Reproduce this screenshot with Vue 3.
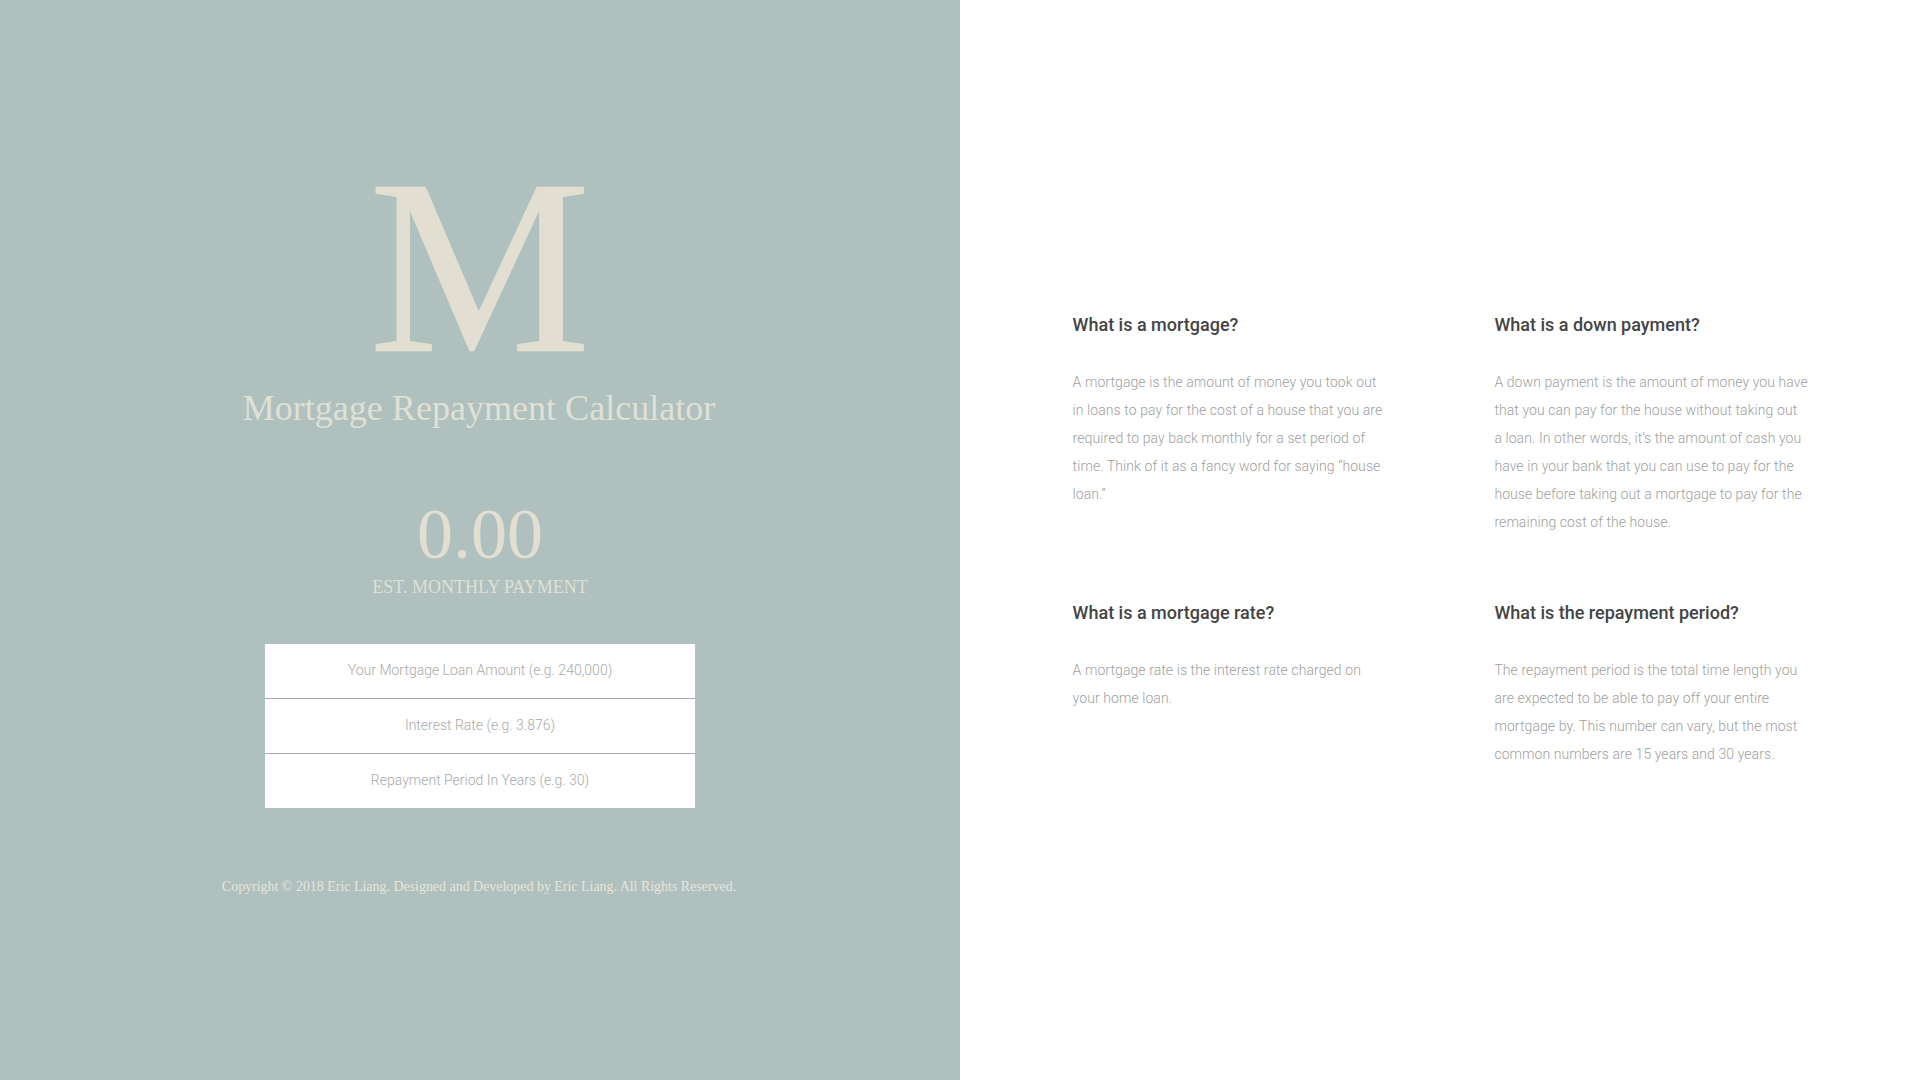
<script setup>
const fields = [
  'Your Mortgage Loan Amount (e.g. 240,000)',
  'Interest Rate (e.g. 3.876)',
  'Repayment Period In Years (e.g. 30)',
]
const faqs = [
  { q: 'What is a mortgage?', a: 'A mortgage is the amount of money you took out in loans to pay for the cost of a house that you are required to pay back monthly for a set period of time. Think of it as a fancy word for saying “house loan.”' },
  { q: 'What is a down payment?', a: 'A down payment is the amount of money you have that you can pay for the house without taking out a\u00A0loan. In other words, it’s the amount of cash you have in your bank that you can use to pay for the house before taking out a mortgage to pay for the remaining cost of the house.' },
  { q: 'What is a mortgage rate?', a: 'A mortgage rate is the interest rate charged on your home loan.' },
  { q: 'What is the repayment period?', a: 'The repayment period is the total time length you are expected to be able to pay off your entire mortgage by. This number can vary, but the most common numbers are 15 years and 30 years.' },
]
</script>

<template>
  <div class="page">
    <section class="calc">
      <div class="logo">M</div>
      <h1 class="title">Mortgage Repayment Calculator</h1>
      <div class="amount">0.00</div>
      <div class="label">EST. MONTHLY PAYMENT</div>
      <form class="fields">
        <input v-for="f in fields" :key="f" class="field" type="text" :placeholder="f" />
      </form>
      <p class="copy">Copyright © 2018 Eric Liang. Designed and Developed by Eric Liang. All Rights Reserved.</p>
    </section>
    <section class="info">
      <div class="grid">
        <article v-for="item in faqs" :key="item.q" class="faq">
          <h2>{{ item.q }}</h2>
          <p>{{ item.a }}</p>
        </article>
      </div>
    </section>
  </div>
</template>

<style>
html, body { margin: 0; background: #fff; }
</style>

<style scoped>
.page { display: flex; width: 1920px; height: 1080px; overflow: hidden; }
.calc {
  width: 960px; height: 1080px; background: #b0c0be; color: #e2dfd2;
  font-family: "Liberation Serif", serif; display: flex; flex-direction: column; align-items: center;
  padding-top: 153px; box-sizing: border-box;
}
.logo { font-size: 250px; line-height: 228px; height: 228px; -webkit-text-stroke: 0.5px #e2dfd2; }
.title { margin: 5px 2px 0 0; font-size: 36px; line-height: 44px; font-weight: 400; letter-spacing: 0.03px; color: #dfe0d6; }
.amount { margin-top: 64px; font-size: 72px; line-height: 80px; }
.label { font-size: 18px; line-height: 24px; color: #dfe0d6; margin-top: 1px; }
.fields { margin-top: 45px; display: flex; flex-direction: column; width: 430px; }
.field {
  height: 55px; width: 100%; box-sizing: border-box; border: 0; border-bottom: 1px solid #a8a8a8; background: #fff;
  text-align: center; font-family: Roboto, sans-serif; font-weight: 300; font-size: 14px; outline: 0; padding: 0 0 2px;
}
.field:last-child { border-bottom: 0; height: 54px; }
.field::placeholder { color: #aaa; opacity: 1; }
.copy { margin: 69px 2px 0 0; font-size: 14px; line-height: 20px; letter-spacing: -0.03px; color: #e6e6dc; }
.info { width: 960px; height: 1080px; font-family: Roboto, sans-serif; padding: 314px 0 0 112.6px; box-sizing: border-box; }
.grid { display: grid; grid-template-columns: 314px 314px; column-gap: 107.8px; row-gap: 66px; }
.faq h2 { margin: 0; font-size: 18px; line-height: 22px; font-weight: 500; color: #444; }
.faq p { margin: 32px 0 0; font-size: 14px; line-height: 28px; font-weight: 300; letter-spacing: 0.08px; color: #a0a0a0; }
</style>
